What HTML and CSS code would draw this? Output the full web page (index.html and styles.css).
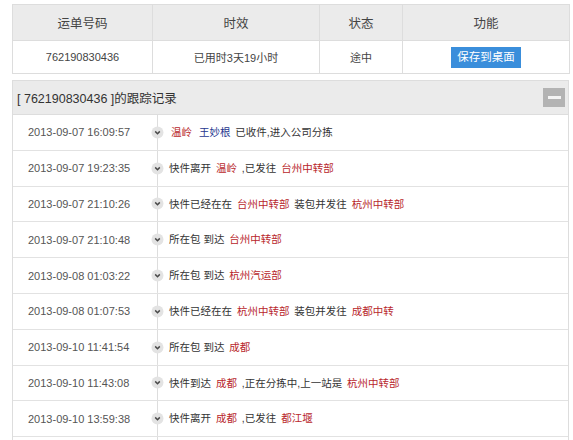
FILE: index.html
```html
<!DOCTYPE html>
<html lang="zh-CN">
<head>
<meta charset="utf-8">
<title>快件跟踪</title>
<link rel="stylesheet" href="styles.css">
</head>
<body>
<div class="page">
  <table class="summary">
    <colgroup>
      <col class="w1"><col class="w2"><col class="w3"><col class="w4">
    </colgroup>
    <thead>
      <tr><th>运单号码</th><th>时效</th><th>状态</th><th>功能</th></tr>
    </thead>
    <tbody>
      <tr>
        <td class="num">762190830436</td>
        <td>已用时3天19小时</td>
        <td>途中</td>
        <td><span class="btn">保存到桌面</span></td>
      </tr>
    </tbody>
  </table>

  <section class="track">
    <header class="track-head">
      <span class="track-title">[ 762190830436 ]的跟踪记录</span>
      <span class="toggle"><span class="bar"></span></span>
    </header>
    <ul class="events">
      <li class="event"><span class="time">2013-09-07 16:09:57</span><span class="node"><svg viewBox="0 0 13 13" width="13" height="13"><circle cx="6.5" cy="6.5" r="6" fill="#e3e3e3"/><path d="M4.2 5.4 L6.5 7.7 L8.8 5.4" fill="none" stroke="#4a4a4a" stroke-width="1.5"/></svg></span><span class="desc"><em class="r">温岭</em> <em class="b">王妙根</em> 已收件,进入公司分拣</span></li>
      <li class="event"><span class="time">2013-09-07 19:23:35</span><span class="node"><svg viewBox="0 0 13 13" width="13" height="13"><circle cx="6.5" cy="6.5" r="6" fill="#e3e3e3"/><path d="M4.2 5.4 L6.5 7.7 L8.8 5.4" fill="none" stroke="#4a4a4a" stroke-width="1.5"/></svg></span><span class="desc">快件离开 <em class="r">温岭</em> ,已发往 <em class="r">台州中转部</em></span></li>
      <li class="event"><span class="time">2013-09-07 21:10:26</span><span class="node"><svg viewBox="0 0 13 13" width="13" height="13"><circle cx="6.5" cy="6.5" r="6" fill="#e3e3e3"/><path d="M4.2 5.4 L6.5 7.7 L8.8 5.4" fill="none" stroke="#4a4a4a" stroke-width="1.5"/></svg></span><span class="desc">快件已经在在 <em class="r">台州中转部</em> 装包并发往 <em class="r">杭州中转部</em></span></li>
      <li class="event"><span class="time">2013-09-07 21:10:48</span><span class="node"><svg viewBox="0 0 13 13" width="13" height="13"><circle cx="6.5" cy="6.5" r="6" fill="#e3e3e3"/><path d="M4.2 5.4 L6.5 7.7 L8.8 5.4" fill="none" stroke="#4a4a4a" stroke-width="1.5"/></svg></span><span class="desc">所在包 到达 <em class="r">台州中转部</em></span></li>
      <li class="event"><span class="time">2013-09-08 01:03:22</span><span class="node"><svg viewBox="0 0 13 13" width="13" height="13"><circle cx="6.5" cy="6.5" r="6" fill="#e3e3e3"/><path d="M4.2 5.4 L6.5 7.7 L8.8 5.4" fill="none" stroke="#4a4a4a" stroke-width="1.5"/></svg></span><span class="desc">所在包 到达 <em class="r">杭州汽运部</em></span></li>
      <li class="event"><span class="time">2013-09-08 01:07:53</span><span class="node"><svg viewBox="0 0 13 13" width="13" height="13"><circle cx="6.5" cy="6.5" r="6" fill="#e3e3e3"/><path d="M4.2 5.4 L6.5 7.7 L8.8 5.4" fill="none" stroke="#4a4a4a" stroke-width="1.5"/></svg></span><span class="desc">快件已经在在 <em class="r">杭州中转部</em> 装包并发往 <em class="r">成都中转</em></span></li>
      <li class="event"><span class="time">2013-09-10 11:41:54</span><span class="node"><svg viewBox="0 0 13 13" width="13" height="13"><circle cx="6.5" cy="6.5" r="6" fill="#e3e3e3"/><path d="M4.2 5.4 L6.5 7.7 L8.8 5.4" fill="none" stroke="#4a4a4a" stroke-width="1.5"/></svg></span><span class="desc">所在包 到达 <em class="r">成都</em></span></li>
      <li class="event"><span class="time">2013-09-10 11:43:08</span><span class="node"><svg viewBox="0 0 13 13" width="13" height="13"><circle cx="6.5" cy="6.5" r="6" fill="#e3e3e3"/><path d="M4.2 5.4 L6.5 7.7 L8.8 5.4" fill="none" stroke="#4a4a4a" stroke-width="1.5"/></svg></span><span class="desc">快件到达 <em class="r">成都</em> ,正在分拣中,上一站是 <em class="r">杭州中转部</em></span></li>
      <li class="event"><span class="time">2013-09-10 13:59:38</span><span class="node"><svg viewBox="0 0 13 13" width="13" height="13"><circle cx="6.5" cy="6.5" r="6" fill="#e3e3e3"/><path d="M4.2 5.4 L6.5 7.7 L8.8 5.4" fill="none" stroke="#4a4a4a" stroke-width="1.5"/></svg></span><span class="desc">快件离开 <em class="r">成都</em> ,已发往 <em class="r">都江堰</em></span></li>
      <li class="event"><span class="time"></span><span class="node"></span><span class="desc"></span></li>
    </ul>
  </section>
</div>
</body>
</html>
```

FILE: styles.css
```css
html, body {
  margin: 0;
  padding: 0;
  background: #ffffff;
}

body {
  font-family: "Liberation Sans", "Noto Sans CJK SC", sans-serif;
  color: #333333;
  overflow: hidden;
}

.page {
  width: 557px;
  padding: 4px 0 0 12px;
}

.summary {
  width: 557px;
  table-layout: fixed;
  border-collapse: collapse;
  border: 1px solid #dddddd;
}

.summary .w1 { width: 140px; }
.summary .w2 { width: 167px; }
.summary .w3 { width: 83px; }
.summary .w4 { width: 167px; }

.summary th,
.summary td {
  border: 1px solid #dddddd;
  text-align: center;
  padding: 0;
  color: #444444;
}

.summary th {
  height: 35px;
  background: #ebebeb;
  font-weight: normal;
  font-size: 12.5px;
}

.summary td {
  height: 32px;
  font-size: 11px;
  background: #ffffff;
}

.btn {
  display: inline-block;
  background: #3a8edb;
  color: #ffffff;
  font-size: 11.5px;
  line-height: 21px;
  padding: 0 6px;
  vertical-align: middle;
}

.track {
  margin-top: 6px;
  border: 1px solid #dddddd;
}

.track-head {
  display: flex;
  align-items: center;
  justify-content: space-between;
  height: 33px;
  background: #ebebeb;
  border-bottom: 1px solid #dddddd;
  padding: 0 3px 0 4px;
}

.track-title {
  font-size: 12.5px;
  color: #333333;
}

.toggle {
  width: 22px;
  height: 19px;
  background: #b3b3b3;
  display: flex;
  align-items: center;
  justify-content: center;
}

.toggle .bar {
  width: 13px;
  height: 3px;
  background: #f4f4f4;
}

.events {
  list-style: none;
  margin: 0;
  padding: 0;
}

.event {
  display: grid;
  grid-template-columns: 132px 24px 1fr;
  align-items: stretch;
  height: 34.8px;
  border-bottom: 1px solid #e2e2e2;
}

.time {
  display: flex;
  align-items: center;
  padding-left: 15px;
  font-size: 11px;
  color: #555555;
}

.node {
  display: flex;
  align-items: center;
  justify-content: center;
  background: linear-gradient(#dddddd, #dddddd) center / 1px 100% no-repeat;
}

.node svg {
  display: block;
}

.desc {
  display: block;
  line-height: 34.8px;
  white-space: nowrap;
  font-size: 10.5px;
  color: #333333;
}

.desc em {
  font-style: normal;
  padding: 0 2px;
}

.desc .r { color: #b8272c; }
.desc .b { color: #26378f; }
```
